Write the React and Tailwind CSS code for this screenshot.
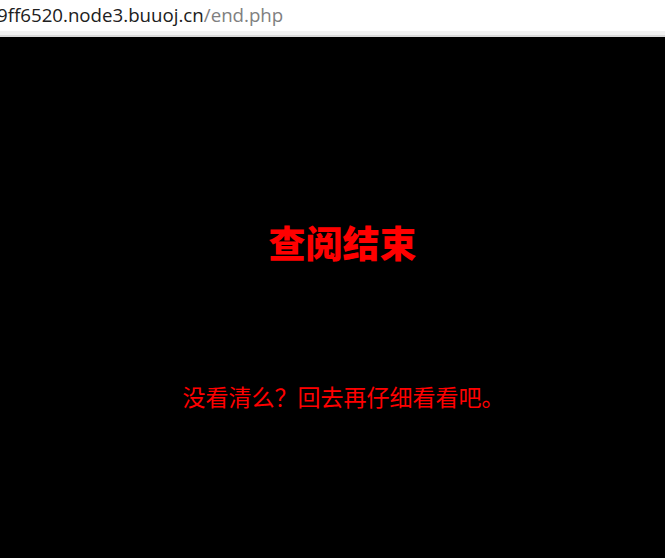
export default function App() {
  return (
    <div className="w-[665px] h-[558px] overflow-hidden bg-black flex flex-col">
      <div className="h-[31px] bg-white overflow-hidden flex items-center">
        <div className="ml-[-3px] text-[18.7px] leading-none whitespace-nowrap text-[#202020]" style={{ fontFamily: '"Open Sans", "Noto Sans", sans-serif' }}>
          9ff6520.node3.buuoj.cn<span className="text-[#808080]">/end.php</span>
        </div>
      </div>
      <div className="h-[4px] bg-[#f2f2f2]" />
      <div className="h-[2px] bg-[#dadada]" />
      <div className="flex-1 flex flex-col items-center pl-[20px] text-[#ff0000]" style={{ fontFamily: '"Noto Sans CJK SC", sans-serif' }}>
        <div className="mt-[187px] text-[37px] leading-[37px] font-black">查阅结束</div>
        <div className="mt-[124px] text-[23px] leading-[23px] pl-[2px]">没看清么？回去再仔细看看吧。</div>
      </div>
    </div>
  );
}
